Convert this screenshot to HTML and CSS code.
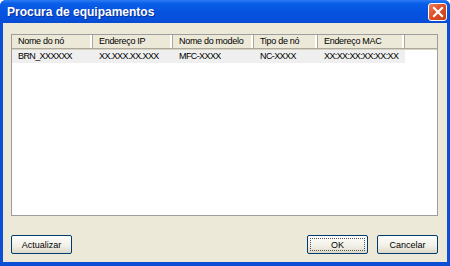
FILE: index.html
```html
<!DOCTYPE html>
<html lang="pt">
<head>
  <meta charset="UTF-8" />
  <title>Procura de equipamentos</title>
  <link rel="stylesheet" href="styles.css">
</head>
<body>
  <div class="window">
    <div class="titlebar">
      <span class="title">Procura de equipamentos</span>
      <div class="close">
        <svg width="12" height="12" viewBox="0 0 12 12">
          <path d="M2 2 L10 10 M10 2 L2 10" stroke="#fff" stroke-width="2.2" stroke-linecap="square" />
        </svg>
      </div>
    </div>
    <div class="content">
      <div class="list">
        <div class="row header">
          <div class="col c1">Nome do nó</div>
          <div class="col c2">Endereço IP</div>
          <div class="col c3">Nome do modelo</div>
          <div class="col c4">Tipo de nó</div>
          <div class="col c5">Endereço MAC</div>
          <div class="col rest"></div>
        </div>
        <div class="row item">
          <div class="col c1">BRN_XXXXXX</div>
          <div class="col c2">XX.XXX.XX.XXX</div>
          <div class="col c3">MFC-XXXX</div>
          <div class="col c4">NC-XXXX</div>
          <div class="col c5">XX:XX:XX:XX:XX:XX</div>
        </div>
      </div>
      <div class="buttons">
        <button class="btn">Actualizar</button>
        <div class="right">
          <button class="btn default">OK</button>
          <button class="btn">Cancelar</button>
        </div>
      </div>
    </div>
  </div>
</body>
</html>
```

FILE: styles.css
```css
body {
  margin: 0;
  font-family: "Liberation Sans", Arial, sans-serif;
  background: #fff;
}
.window {
  width: 450px;
  height: 266px;
  box-sizing: border-box;
  background: #0a4fd6;
  display: flex;
  flex-direction: column;
  padding: 0 3px 4px 3px;
  border-radius: 6px 6px 0 0;
}
.titlebar {
  height: 23px;
  margin: 0 -3px;
  padding: 0 3px 0 7px;
  display: flex;
  align-items: center;
  justify-content: space-between;
  background: linear-gradient(#2d7cf5 0%, #0a5fe8 15%, #0653e0 50%, #0550db 85%, #0a4ad0 100%);
  border-radius: 6px 6px 0 0;
}
.title {
  color: #fff;
  font-weight: bold;
  font-size: 12px;
  text-shadow: 1px 1px 0 #0a2f9a;
}
.close {
  width: 17px;
  height: 16px;
  border: 1px solid #fff;
  border-radius: 3px;
  background: linear-gradient(135deg, #ea8060 0%, #e05028 45%, #c83c14 100%);
  display: flex;
  align-items: center;
  justify-content: center;
  margin-top: 1px;
}
.content {
  flex: 1;
  background: #ece9d8;
  display: flex;
  flex-direction: column;
  padding: 11px 9px 8px 8px;
}
.list {
  height: 182px;
  box-sizing: border-box;
  background: #fff;
  border: 1px solid #9d9d9d;
  font-size: 9px;
  letter-spacing: -0.3px;
  color: #000;
}
.row {
  display: flex;
}
.header {
  height: 13px;
  background: #ece9d8;
  border-bottom: 1px solid #aca899;
  box-shadow: 0 1px 0 #d6d2c2;
}
.header .col {
  border-right: 1px solid #aca899;
  box-shadow: inset -2px 0 0 #fff;
  line-height: 13px;
}
.header .rest {
  flex: 1;
  border-right: none;
  box-shadow: none;
}
.item {
  margin-top: 1px;
  height: 13px;
  line-height: 13px;
  letter-spacing: -0.6px;
}
.item .col {
  background: #efefef;
}
.col {
  box-sizing: border-box;
  padding-left: 6px;
  white-space: nowrap;
  overflow: hidden;
}
.c1 { width: 81px; }
.c2 { width: 80px; }
.c3 { width: 81px; }
.c4 { width: 64px; }
.c5 { width: 87px; }
.buttons {
  margin-top: auto;
  display: flex;
  justify-content: space-between;
}
.right {
  display: flex;
  gap: 9px;
}
.btn {
  width: 61px;
  height: 19px;
  padding: 0;
  font-family: "Liberation Sans", Arial, sans-serif;
  font-size: 9px;
  color: #000;
  background: linear-gradient(#fdfdfb, #f1efe6 60%, #dcd8c8);
  border: 1px solid #003c74;
  border-radius: 2px;
}
.default {
  outline: 1px dotted #555;
  outline-offset: -4px;
}
```
